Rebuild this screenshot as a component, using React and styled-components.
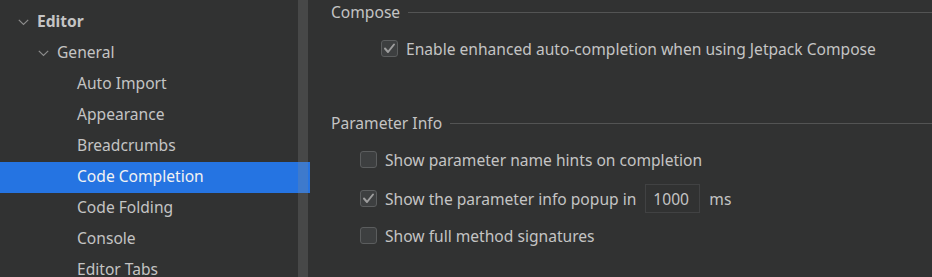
import React from 'react';
import styled, { createGlobalStyle } from 'styled-components';

const GlobalStyle = createGlobalStyle`
    html, body {
        margin: 0;
        padding: 0;
        background: #313232;
    }
    body {
        font-family: "Noto Sans", "Open Sans", sans-serif;
        font-size: 15.6px;
        color: #bbbbbb;
    }
`;

const treeItems = [
    { label: 'Editor', level: 0, expandable: true, bold: true },
    { label: 'General', level: 1, expandable: true },
    { label: 'Auto Import', level: 2 },
    { label: 'Appearance', level: 2 },
    { label: 'Breadcrumbs', level: 2 },
    { label: 'Code Completion', level: 2, selected: true },
    { label: 'Code Folding', level: 2 },
    { label: 'Console', level: 2 },
    { label: 'Editor Tabs', level: 2 },
];

const Chevron = () => (
    <svg width="11" height="7" viewBox="0 0 11 7">
        <polyline points="0.8,0.8 5.5,5.5 10.2,0.8" fill="none" stroke="#8c8c8c" strokeWidth="1.2" />
    </svg>
);

const Check = () => (
    <svg width="13" height="11" viewBox="0 0 13 11">
        <polyline points="2,5.5 5,9 11,1.5" fill="none" stroke="#9d9d9d" strokeWidth="2" strokeLinecap="round" strokeLinejoin="round" />
    </svg>
);

const App = () => {
    return (
        <>
            <GlobalStyle />
            <Window>
                <Sidebar>
                    {treeItems.map(item => (
                        <TreeRow key={item.label} $level={item.level} $selected={item.selected}>
                            <ArrowSlot>{item.expandable && <Chevron />}</ArrowSlot>
                            <TreeLabel $bold={item.bold}>{item.label}</TreeLabel>
                        </TreeRow>
                    ))}
                    <Scrollbar />
                </Sidebar>
                <Content>
                    <Group>
                        <GroupTitle>Compose</GroupTitle>
                        <Option $indent={50} $top={10}>
                            <CheckBox><Check /></CheckBox>
                            Enable enhanced auto-completion when using Jetpack Compose
                        </Option>
                    </Group>
                    <Group $top={48}>
                        <GroupTitle>Parameter Info</GroupTitle>
                        <Option $indent={29} $top={10}>
                            <CheckBox />
                            Show parameter name hints on completion
                        </Option>
                        <Option $indent={29} $top={10}>
                            <CheckBox><Check /></CheckBox>
                            Show the parameter info popup in
                            <NumberField>1000</NumberField>
                            <Unit>ms</Unit>
                        </Option>
                        <Option $indent={29} $top={8}>
                            <CheckBox />
                            Show full method signatures
                        </Option>
                    </Group>
                </Content>
            </Window>
        </>
    );
};

export default App;

// Layout
const Window = styled.div`
    display: flex;
    width: 932px;
    height: 277px;
    overflow: hidden;
    background: #313232;
`;

const Sidebar = styled.div`
    position: relative;
    flex: 0 0 310px;
    padding-top: 7px;
    box-sizing: border-box;
`;

const TreeRow = styled.div`
    display: flex;
    align-items: center;
    height: 31px;
    padding-left: ${p => p.$level * 20 + 18}px;
    background: ${p => (p.$selected ? '#2574e2' : 'transparent')};
    color: ${p => (p.$selected ? '#f2f2f2' : '#c4c4c4')};
    line-height: 31px;
    white-space: nowrap;
`;

const ArrowSlot = styled.span`
    display: flex;
    align-items: center;
    width: 19px;
    height: 100%;
    svg {
        margin-top: -1px;
    }
`;

const TreeLabel = styled.span`
    font-weight: ${p => (p.$bold ? 700 : 400)};
    margin-top: -3px;
`;

const Scrollbar = styled.div`
    position: absolute;
    top: 0;
    bottom: 0;
    left: 298px;
    width: 10px;
    background: rgba(140, 140, 140, 0.25);
`;

const Content = styled.div`
    flex: 1;
    padding-left: 21px;
`;

const Group = styled.div`
    margin-top: ${p => p.$top || 0}px;
`;

const GroupTitle = styled.div`
    display: flex;
    align-items: center;
    gap: 8px;
    height: 24px;
    color: #c4c4c4;
    white-space: nowrap;
    &::after {
        content: '';
        flex: 1;
        height: 1px;
        background: #535454;
        margin-top: 1px;
    }
`;

const Option = styled.div`
    display: flex;
    align-items: center;
    height: 29px;
    margin-top: ${p => p.$top || 0}px;
    padding-left: ${p => p.$indent}px;
    color: #c4c4c4;
    white-space: nowrap;
`;

const CheckBox = styled.span`
    display: flex;
    align-items: center;
    justify-content: center;
    box-sizing: border-box;
    width: 17px;
    height: 17px;
    margin-right: 8px;
    border: 1px solid #5b5d5e;
    border-radius: 3px;
    background: #3d3f40;
`;

const NumberField = styled.span`
    display: flex;
    align-items: center;
    box-sizing: border-box;
    height: 29px;
    width: 55px;
    margin-left: 9px;
    padding-left: 7px;
    border: 1px solid #414243;
`;

const Unit = styled.span`
    margin-left: 9px;
`;
